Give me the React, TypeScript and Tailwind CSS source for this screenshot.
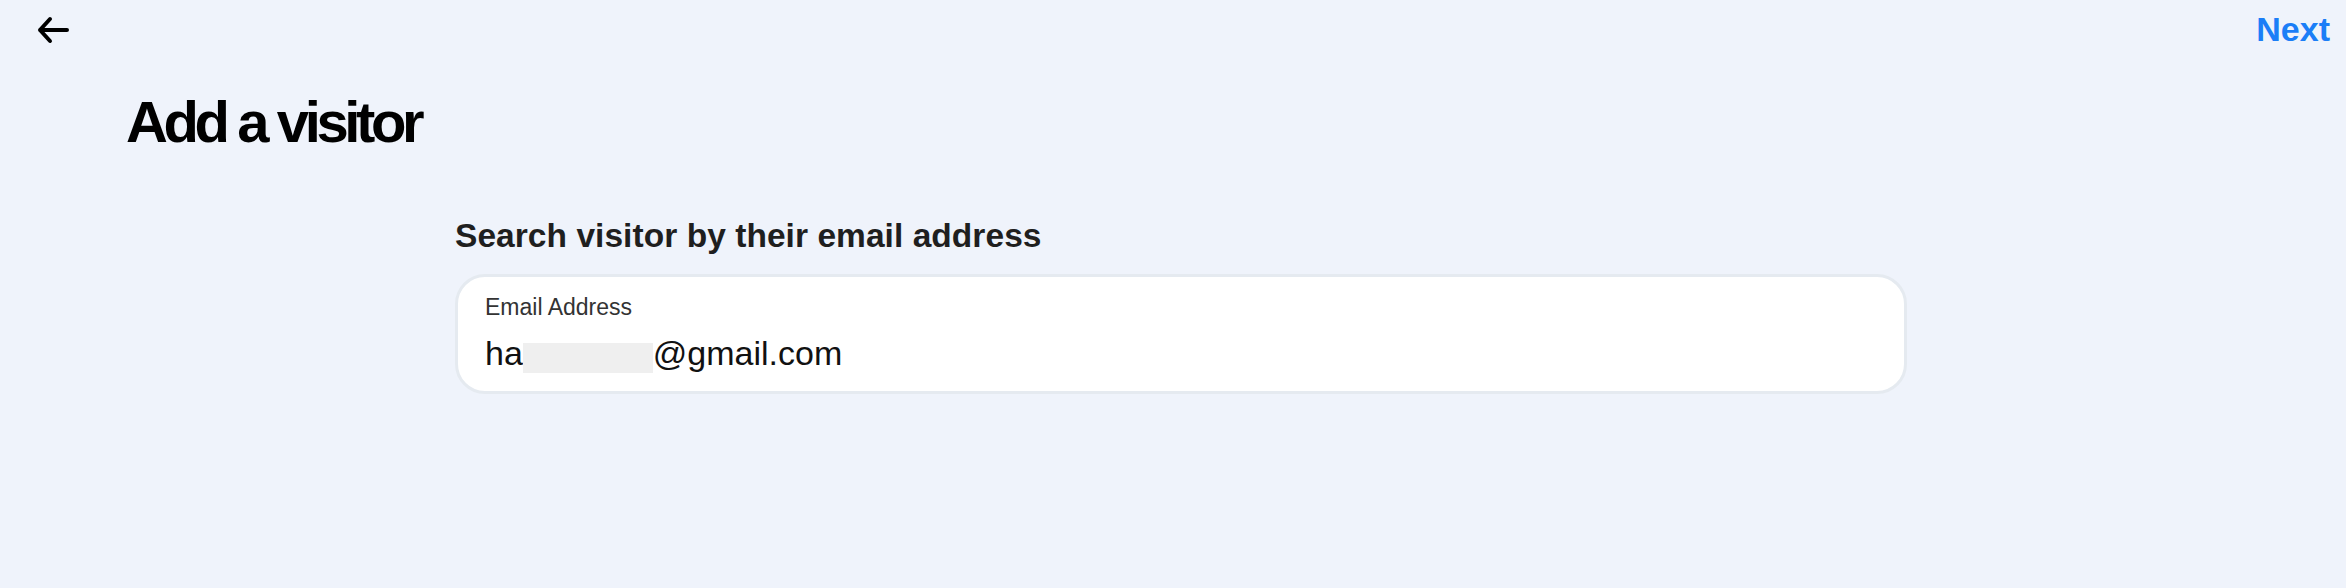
export default function App() {
  return (
    <div className="min-h-screen bg-[#eff3fb] font-['Liberation_Sans',Arial,sans-serif]">
      <div className="flex items-start justify-between pt-[12px] pl-[36px] pr-[16px]">
        <button className="mt-[3px]" aria-label="Back">
          <svg width="34" height="30" viewBox="0 0 34 30" fill="none">
            <path
              d="M31 15H4M14 4L4 15L14 26"
              stroke="#000"
              strokeWidth="4"
              strokeLinecap="round"
              strokeLinejoin="round"
            />
          </svg>
        </button>
        <span className="text-[34px] leading-none font-bold text-[#1b7ef7]">Next</span>
      </div>

      <h1 className="mt-[47px] pl-[126px] text-[58px] leading-none font-bold tracking-[-4.4px] text-black">
        Add a visitor
      </h1>

      <div className="pl-[455px]">
        <h2 className="mt-[68px] text-[33.5px] leading-none font-bold tracking-[0.05px] text-[#1f1f1f]">
          Search visitor by their email address
        </h2>

        <div className="mt-[21px] flex h-[120px] w-[1452px] flex-col rounded-[30px] border-[3px] border-[#e5eaf0] bg-white pt-[19px] pl-[27px]">
          <label className="text-[23px] leading-none text-[#333]">Email Address</label>
          <div className="mt-[17px] text-[34px] leading-none text-[#111]">
            ha
            <span className="inline-block h-[30px] w-[130px] bg-[#efefef] align-[-8px]" />
            @gmail.com
          </div>
        </div>
      </div>
    </div>
  )
}
